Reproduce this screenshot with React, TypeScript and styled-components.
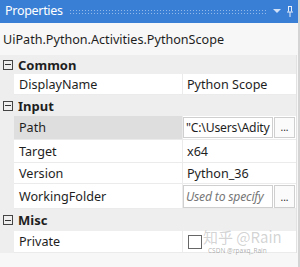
import React from "react";
import styled, { createGlobalStyle } from "styled-components";

const Global = createGlobalStyle`
  html, body { margin: 0; padding: 0; background: #f7f7f7; }
  * { box-sizing: border-box; }
`;

const Panel = styled.div`
  width: 300px;
  height: 267px;
  display: flex;
  flex-direction: column;
  background: #f7f7f7;
  font-family: "Noto Sans", "Open Sans", sans-serif;
  font-size: 12.6px;
  color: #1e1e1e;
  border-right: 2px solid #d4d4d4;
  overflow: hidden;
`;

const TitleBar = styled.div`
  height: 23px;
  background: #3a7fd6;
  display: flex;
  align-items: center;
  padding: 0 4px 0 5px;
  gap: 6px;
  color: #fff;
`;

const TitleText = styled.span`
  font-size: 12.5px;
  letter-spacing: -0.3px;
  line-height: 1;
`;

const Dots = styled.div`
  flex: 1;
  height: 6px;
  background-image: radial-gradient(circle, rgba(255, 255, 255, 0.45) 0.6px, transparent 0.8px);
  background-size: 3px 3px;
`;

const TitleIcons = styled.div`
  display: flex;
  align-items: center;
  gap: 5px;
`;

const Subtitle = styled.div`
  height: 32px;
  display: flex;
  align-items: center;
  padding-left: 3px;
`;

const Grid = styled.div`
  display: flex;
  flex-direction: column;
  margin-right: 1px;
  border-right: 1px solid #e2e2e2;
`;

const CategoryRow = styled.div<{ $h: number }>`
  height: ${(p) => p.$h}px;
  display: flex;
  align-items: center;
  background: #eeeeee;
  font-weight: 700;
  font-size: 13px;
`;

const Toggle = styled.span`
  width: 10px;
  height: 10px;
  border: 1px solid #444;
  margin: 0 5px 0 3px;
  position: relative;
  &::after {
    content: "";
    position: absolute;
    left: 1px;
    right: 1px;
    top: 3.5px;
    height: 1px;
    background: #333;
  }
`;

const PropRow = styled.div<{ $h: number }>`
  height: ${(p) => p.$h}px;
  display: flex;
  background: #eeeeee;
`;

const NameCell = styled.div<{ $selected?: boolean }>`
  margin-left: 14px;
  width: 169px;
  display: flex;
  align-items: center;
  padding-left: 5px;
  background: ${(p) => (p.$selected ? "#dedede" : "#ffffff")};
  border-bottom: 1px solid #ebebeb;
  border-right: 1px solid #ebebeb;
`;

const ValueCell = styled.div`
  flex: 1;
  display: flex;
  align-items: center;
  gap: 1px;
  background: #fff;
  border-bottom: 1px solid #ebebeb;
`;

const PlainValue = styled.span`
  padding-left: 4px;
`;

const TextBox = styled.div<{ $placeholder?: boolean }>`
  width: 90px;
  height: ${(p) => (p.$placeholder ? 23 : 21)}px;
  border: 1px solid #cfcfcf;
  display: flex;
  align-items: center;
  padding-left: 2px;
  overflow: hidden;
  white-space: nowrap;
  font-size: 12.2px;
  letter-spacing: -0.2px;
  font-style: ${(p) => (p.$placeholder ? "italic" : "normal")};
  color: ${(p) => (p.$placeholder ? "#777" : "#1e1e1e")};
  background: #fff;
`;

const DotsButton = styled.div<{ $tall?: boolean }>`
  width: 21px;
  height: ${(p) => (p.$tall ? 23 : 21)}px;
  border: 1px solid #cfcfcf;
  background: #fbfbfb;
  display: flex;
  align-items: flex-end;
  justify-content: center;
  padding-bottom: 5px;
  font-size: 10px;
  line-height: 1;
`;

const CheckBox = styled.span`
  width: 14px;
  height: 14px;
  border: 1px solid #666;
  margin-left: 5px;
  background: #fff;
`;

const Wrap = styled.div`
  position: relative;
`;

const Watermark = styled.div`
  position: absolute;
  left: 203px;
  top: 229px;
  color: rgba(130, 130, 130, 0.35);
  font-size: 15px;
  font-family: "Noto Sans CJK SC", sans-serif;
  line-height: 1;
  white-space: nowrap;
`;

const WatermarkSmall = styled.div`
  position: absolute;
  left: 208px;
  top: 248px;
  color: rgba(80, 80, 80, 0.45);
  font-family: "Noto Sans", sans-serif;
  font-size: 6.5px;
  line-height: 1;
  white-space: nowrap;
`;

export default function App() {
  return (
    <Wrap>
      <Global />
      <Panel>
        <TitleBar>
          <TitleText>Properties</TitleText>
          <Dots />
          <TitleIcons>
            <svg width="8" height="5" viewBox="0 0 8 5">
              <path d="M0 0h8L4 4z" fill="#cfe0f7" />
            </svg>
            <svg width="8" height="11" viewBox="0 0 8 11">
              <path d="M2 0.5h4M2.5 0.5v5M5.5 0.5v5M1 6h6M4 6v5" stroke="#e8f0fb" strokeWidth="1" fill="none" />
            </svg>
          </TitleIcons>
        </TitleBar>
        <Subtitle>UiPath.Python.Activities.PythonScope</Subtitle>
        <Grid>
          <CategoryRow $h={19}>
            <Toggle />
            Common
          </CategoryRow>
          <PropRow $h={21}>
            <NameCell>DisplayName</NameCell>
            <ValueCell><PlainValue>Python Scope</PlainValue></ValueCell>
          </PropRow>
          <CategoryRow $h={21}>
            <Toggle />
            Input
          </CategoryRow>
          <PropRow $h={24}>
            <NameCell $selected>Path</NameCell>
            <ValueCell>
              <TextBox>"C:\Users\Adity</TextBox>
              <DotsButton>...</DotsButton>
            </ValueCell>
          </PropRow>
          <PropRow $h={23}>
            <NameCell>Target</NameCell>
            <ValueCell><PlainValue>x64</PlainValue></ValueCell>
          </PropRow>
          <PropRow $h={21}>
            <NameCell>Version</NameCell>
            <ValueCell><PlainValue>Python_36</PlainValue></ValueCell>
          </PropRow>
          <PropRow $h={25}>
            <NameCell>WorkingFolder</NameCell>
            <ValueCell>
              <TextBox $placeholder>Used to specify</TextBox>
              <DotsButton $tall>...</DotsButton>
            </ValueCell>
          </PropRow>
          <CategoryRow $h={22}>
            <Toggle />
            Misc
          </CategoryRow>
          <PropRow $h={22}>
            <NameCell>Private</NameCell>
            <ValueCell><CheckBox /></ValueCell>
          </PropRow>
        </Grid>
      </Panel>
      <Watermark>知乎 @Rain</Watermark>
      <WatermarkSmall>CSDN @rpaxq_Rain</WatermarkSmall>
    </Wrap>
  );
}
